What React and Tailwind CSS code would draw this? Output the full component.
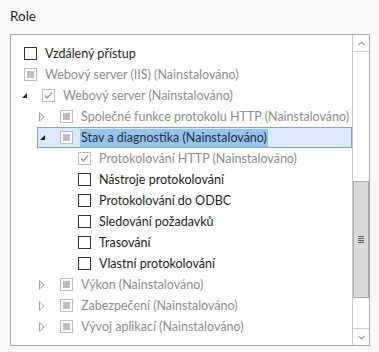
import React from "react";

const FONT = { fontFamily: 'Lato, "Noto Sans", sans-serif' };

function Checkbox({ state, disabled }) {
  const border = disabled ? "border-[#bcbcbc]" : "border-[#333333]";
  return (
    <div className={`w-[13px] h-[13px] border ${border} bg-white flex items-center justify-center shrink-0`}>
      {state === "partial" && <div className="w-[7px] h-[7px] bg-[#bdbdbd]" />}
      {state === "check" && (
        <svg width="11" height="11" viewBox="0 0 11 11">
          <path d="M2 5.5 L4.3 8 L9 2.5" fill="none" stroke="#9a9a9a" strokeWidth="1.4" />
        </svg>
      )}
    </div>
  );
}

function Arrow({ kind }) {
  if (kind === "open") {
    return (
      <svg width="7" height="7" viewBox="0 0 7 7" className="block">
        <path d="M6 1 L6 6 L1 6 Z" fill="#262626" />
      </svg>
    );
  }
  if (kind === "closed") {
    return (
      <svg width="6" height="10" viewBox="0 0 6 10" className="block">
        <path d="M0.5 0.8 L5 5 L0.5 9.2 Z" fill="none" stroke="#a0a0a0" strokeWidth="1" />
      </svg>
    );
  }
  return null;
}

const rows = [
  { level: 0, text: "Vzdálený přístup", cb: "empty", disabled: false },
  { level: 0, text: "Webový server (IIS) (Nainstalováno)", cb: "partial", disabled: true },
  { level: 1, arrow: "open", text: "Webový server (Nainstalováno)", cb: "check", disabled: true },
  { level: 2, arrow: "closed", text: "Společné funkce protokolu HTTP (Nainstalováno)", cb: "partial", disabled: true },
  { level: 2, arrow: "open", text: "Stav a diagnostika (Nainstalováno)", cb: "partial", disabled: true, selected: true },
  { level: 3, text: "Protokolování HTTP (Nainstalováno)", cb: "check", disabled: true },
  { level: 3, text: "Nástroje protokolování", cb: "empty", disabled: false },
  { level: 3, text: "Protokolování do ODBC", cb: "empty", disabled: false },
  { level: 3, text: "Sledování požadavků", cb: "empty", disabled: false },
  { level: 3, text: "Trasování", cb: "empty", disabled: false },
  { level: 3, text: "Vlastní protokolování", cb: "empty", disabled: false },
  { level: 2, arrow: "closed", text: "Výkon (Nainstalováno)", cb: "partial", disabled: true },
  { level: 2, arrow: "closed", text: "Zabezpečení (Nainstalováno)", cb: "partial", disabled: true },
  { level: 2, arrow: "closed", text: "Vývoj aplikací (Nainstalováno)", cb: "partial", disabled: true },
];

const indent = {
  1: "ml-[8px]",
  2: "ml-[26px]",
  3: "ml-[44px]",
};

function Row({ r }) {
  const textColor = r.disabled ? "text-[#8d8d8d]" : "text-[#1e1e1e]";
  const sel = r.selected
    ? "bg-[#dcebfc] border border-[#7da2ce]"
    : "border border-transparent";
  return (
    <div className={`h-[21px] flex items-center ${r.level === 0 ? "ml-[12px]" : indent[r.level]} ${sel}`}>
      {r.level > 0 && (
        <div className="w-[22px] shrink-0 flex items-center pl-[1px]">
          <Arrow kind={r.arrow} />
        </div>
      )}
      <Checkbox state={r.cb} disabled={r.disabled} />
      {r.selected ? (
        <span className="ml-[7px] pl-[1px] pr-[1px] pt-[1px] h-[18px] flex items-center bg-[#98c4ee] text-[#1f2d44] text-[12.5px] whitespace-nowrap">
          {r.text}
        </span>
      ) : (
        <span className={`ml-[8px] pt-[2px] text-[12.5px] whitespace-nowrap ${textColor}`}>{r.text}</span>
      )}
    </div>
  );
}

export default function App() {
  return (
    <div className="w-[379px] h-[352px] bg-[#f9f9f9] overflow-hidden" style={FONT}>
      <div className="pl-[10px] pt-[6px] h-[34px] text-[13.5px] text-[#1e1e1e]">Role</div>
      <div className="ml-[10px] w-[360px] h-[312px] border border-[#a9a9a9] bg-white flex">
        <div className="flex-1 pt-[8px] overflow-hidden">
          {rows.map((r, i) => (
            <Row key={i} r={r} />
          ))}
        </div>
        <div className="w-[17px] border-l border-[#c8c8c8] flex flex-col">
          <div className="h-[17px] border-b border-[#d0d0d0] flex items-center justify-center">
            <svg width="7" height="5" viewBox="0 0 7 5">
              <path d="M0.5 4 L3.5 1 L6.5 4" fill="none" stroke="#606060" strokeWidth="1" />
            </svg>
          </div>
          <div className="h-[129px]" />
          <div className="h-[117px] bg-[#dadada] border border-[#a8a8a8] flex items-center justify-center">
            <div className="flex flex-col gap-[1px]">
              <div className="w-[6px] h-[1px] bg-[#555]" />
              <div className="w-[6px] h-[1px] bg-[#555]" />
              <div className="w-[6px] h-[1px] bg-[#555]" />
              <div className="w-[6px] h-[1px] bg-[#555]" />
            </div>
          </div>
          <div className="flex-1" />
          <div className="h-[17px] border-t border-[#d0d0d0] flex items-center justify-center">
            <svg width="7" height="5" viewBox="0 0 7 5">
              <path d="M0.5 1 L3.5 4 L6.5 1" fill="none" stroke="#606060" strokeWidth="1" />
            </svg>
          </div>
        </div>
      </div>
    </div>
  );
}
